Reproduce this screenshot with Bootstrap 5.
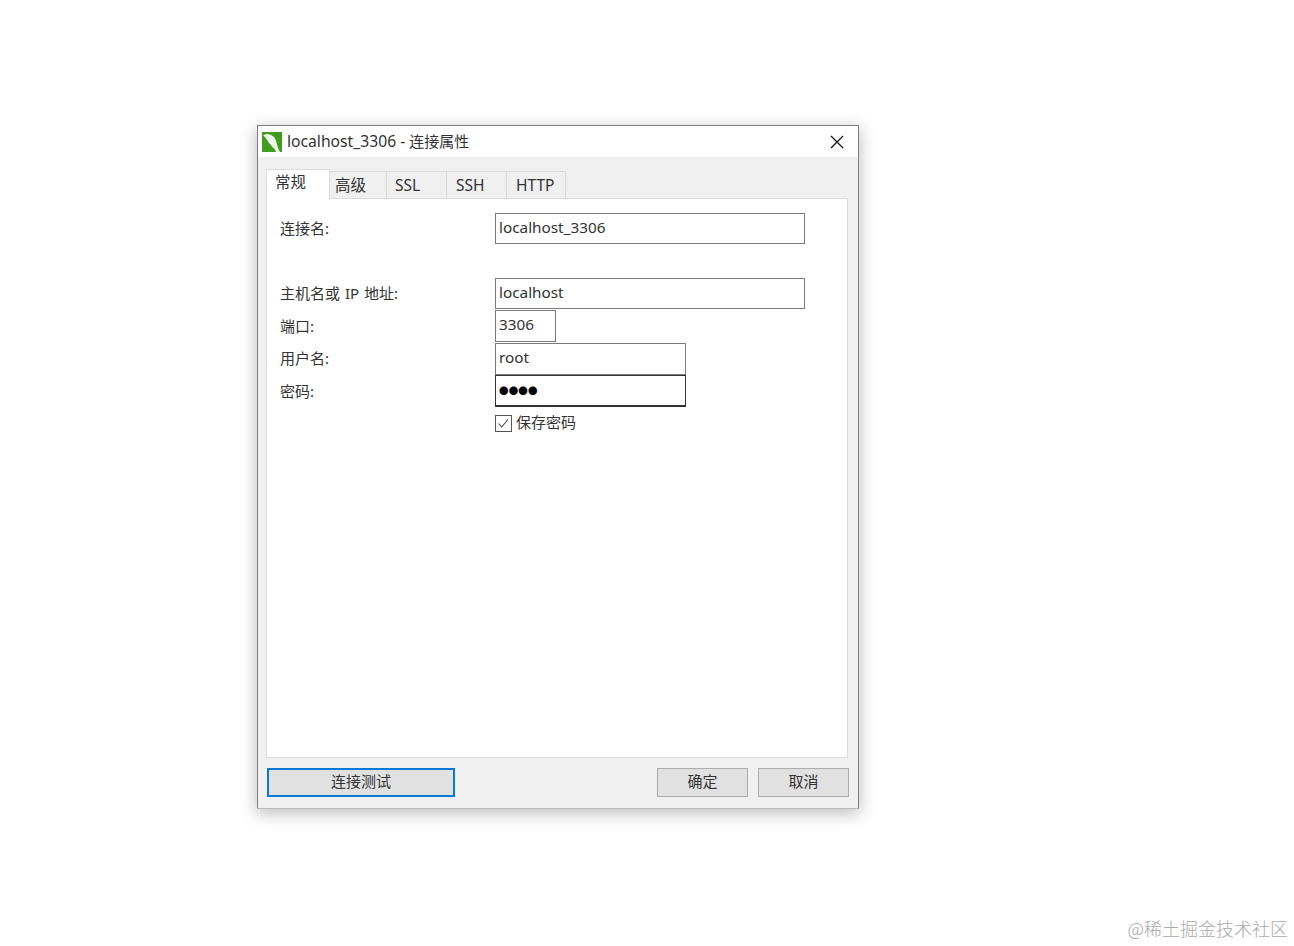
<!DOCTYPE html>
<html lang="zh">
<head>
<meta charset="utf-8">
<title>localhost_3306 - 连接属性</title>
<link href="https://cdn.jsdelivr.net/npm/bootstrap@5.3.0/dist/css/bootstrap.min.css" rel="stylesheet">
<style>
html,body{height:100%;}
body{background:#fff;font-family:"Noto Sans","Noto Sans CJK SC",sans-serif;font-size:15.5px;color:#222;padding:125px 0 0 257px;position:relative;overflow:hidden;}
.dlg{width:602px;height:684px;background:#f0f0f0;border:1px solid #7f7f7f;border-bottom-color:#bbb;box-shadow:0 4px 16px rgba(0,0,0,.28);}
.dlg-title{height:31px;background:#fff;padding-left:4px;line-height:1;}
.dlg-logo{width:20px;height:20px;margin-right:5px;flex:none;}
.dlg-name{font-size:15.7px;color:#333;}
.dlg-name b{font-weight:400;font-size:15px;}
.dlg-close{width:14px;height:14px;margin-right:14px;margin-left:auto;}
.tabstrip{padding:12px 0 0 8px;height:41px;position:relative;z-index:1;}
.tabitem{height:27px;margin-top:2px;background:#f0f0f0;border:1px solid #dadada;border-bottom:0;border-left-width:0;line-height:27px;color:#333;}
.tabitem.on{width:64px;height:30px;margin-top:0;background:#fff;border-left-width:1px;border-color:#dcdcdc;line-height:24px;padding-left:8px;}
.t-b{width:57px;padding-left:5px;}
.t-c{width:60px;padding-left:8px;}
.t-d{width:60px;padding-left:9px;}
.t-e{width:59px;padding-left:9px;}
.tabpanel{margin:0 10px 0 8px;height:560px;background:#fff;border:1px solid #dcdcdc;padding:14px 14px 0 13px;}
.frow{display:grid;grid-template-columns:215px 1fr;align-items:center;color:#333;}
.frow label{font-size:15px;word-spacing:1px;}
.gap-a{height:34px;}
.fld{display:block;height:32px;border:1px solid #7a7a7a;background:#fff;padding:0 3px;font:inherit;font-size:15.3px;color:#333;outline:0;border-radius:0;line-height:26px;}
.fld.w-l{width:310px;height:31px;line-height:26px;}
.fld.w-s{width:61px;}
.fld.w-m{width:191px;}
.fld.dark{border-color:#333;border-width:1px 1px 2px 1px;line-height:30px;}
.r-gap{margin-top:1px;}
.lbl-up{margin-top:-2px;}
.dots{font-size:9.5px;letter-spacing:.15px;color:#000;}
.chk{margin-top:8px;font-size:15px;line-height:17px;}
.chkbox{width:17px;height:17px;border:1px solid #555;background:#fff;flex:none;}
.chk-t{margin-top:-2px;}
.footbar{padding:10px 9px 0 9px;}
.wbtn{height:29px;width:91px;background:#e1e1e1;border:1px solid #adadad;border-radius:0;padding:0 0 2px;font-size:15px;color:#333;line-height:1;}
.wbtn.wide{width:188px;border:2px solid #0a78d4;}
.wbtn.next{margin-right:10px;}
.mark-w{position:absolute;right:6px;bottom:4px;font-family:"Noto Sans CJK SC","Liberation Serif",serif;font-size:18px;color:#a9a9a9;font-weight:300;}
</style>
</head>
<body>
<div class="dlg d-flex flex-column">
  <div class="dlg-title d-flex align-items-center">
    <svg class="dlg-logo" viewBox="0 0 20 20"><rect width="20" height="20" fill="#3f9c1f"/><path d="M1 3.500 4 2c3 0 6 1 8 3 2 2.500 2.500 5 3 7.500.5 2.500 1.500 5 3 7.500h-4c-.6-2-1.500-3.500-3-4.500-1-.5-1.500-2-2.500-3C6 10.500 5 6 1 3.500z" fill="#eef6ea"/></svg>
    <span class="dlg-name">localhost_3306 - <b>连接属性</b></span>
    <svg class="dlg-close" viewBox="0 0 14 14"><path d="M1 1l12 12M13 1L1 13" stroke="#111" stroke-width="1.2" fill="none"/></svg>
  </div>
  <div class="tabstrip d-flex align-items-start">
    <div class="tabitem on">常规</div>
    <div class="tabitem t-b">高级</div>
    <div class="tabitem t-c">SSL</div>
    <div class="tabitem t-d">SSH</div>
    <div class="tabitem t-e">HTTP</div>
  </div>
  <div class="tabpanel">
    <div class="frow"><label>连接名:</label><div class="fld w-l">localhost_3306</div></div>
    <div class="gap-a"></div>
    <div class="frow"><label>主机名或 IP 地址:</label><div class="fld w-l">localhost</div></div>
    <div class="frow r-gap"><label>端口:</label><div class="fld w-s">3306</div></div>
    <div class="frow r-gap"><label class="lbl-up">用户名:</label><div class="fld w-m">root</div></div>
    <div class="frow"><label>密码:</label><div class="fld w-m dark dots">●●●●</div></div>
    <div class="frow chk"><span></span><div class="d-flex align-items-center gap-1">
      <svg class="chkbox" viewBox="0 0 17 17"><path d="M3 8.500l3.500 4L13.500 4" stroke="#444" stroke-width="1.2" fill="none"/></svg><span class="chk-t">保存密码</span></div></div>
  </div>
  <div class="footbar d-flex">
    <button class="wbtn wide" type="button">连接测试</button>
    <button class="wbtn ms-auto next" type="button">确定</button>
    <button class="wbtn" type="button">取消</button>
  </div>
</div>
<div class="mark-w">@稀土掘金技术社区</div>
<script src="https://cdn.jsdelivr.net/npm/bootstrap@5.3.0/dist/js/bootstrap.bundle.min.js"></script>
</body>
</html>
